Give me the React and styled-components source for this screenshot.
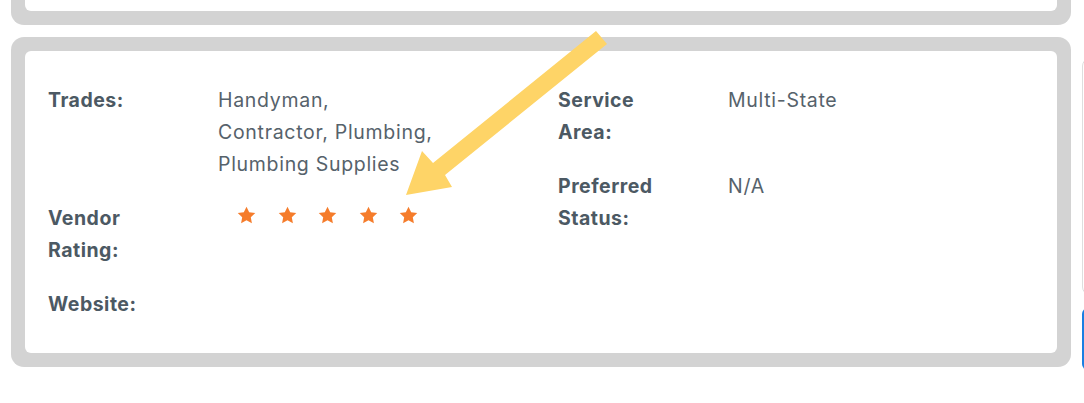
import React from "react";
import styled, { createGlobalStyle, css } from "styled-components";

const GlobalStyle = createGlobalStyle`
  html, body { margin: 0; padding: 0; background: #ffffff; }
  body { font-family: Inter, "Open Sans", Arial, sans-serif; }
  * { box-sizing: border-box; }
`;

const Page = styled.div`
  position: relative;
  display: flex;
  align-items: flex-start;
  gap: 11px;
  padding-left: 11px;
  width: 1084px;
  height: 403px;
  overflow: hidden;
`;

const Main = styled.div`
  width: 1060px;
  flex: none;
  display: flex;
  flex-direction: column;
  gap: 12px;
`;

const Card = styled.section`
  background: #d3d3d3;
  padding: 14px;
  border-radius: 13px;
  ${(p) =>
    p.$tail &&
    css`
      padding-top: 0;
      border-radius: 0 0 13px 13px;
    `}
`;

const CardInner = styled.div`
  background: #ffffff;
  border-radius: 6px;
  padding: 33px 23px 33px 23px;
  ${(p) =>
    p.$tail &&
    css`
      height: 11px;
      padding: 0;
      border-radius: 0 0 6px 6px;
    `}
`;

const InfoGrid = styled.div`
  display: grid;
  grid-template-columns: 510px 1fr;
`;

const Column = styled.div`
  display: flex;
  flex-direction: column;
  gap: 22px;
`;

const Field = styled.div`
  display: grid;
  grid-template-columns: 170px 1fr;
  font-size: 19.5px;
  line-height: 32px;
  letter-spacing: 0.7px;
`;

const Label = styled.div`
  font-weight: 650;
  color: #4c5963;
  width: 120px;
  letter-spacing: 0.5px;
`;

const Value = styled.div`
  color: #56626b;
  font-weight: 400;
  max-width: 218px;
`;

const Stars = styled.div`
  display: flex;
  gap: 21.5px;
  padding-left: 19px;
  height: 32px;
  align-items: center;
  margin-top: -3px;
`;

const Sidebar = styled.aside`
  flex: none;
  width: 200px;
  display: flex;
  flex-direction: column;
  gap: 13px;
  padding-top: 58px;
`;

const SideCard = styled.div`
  height: 237px;
  border: 1px solid #dedede;
  border-radius: 8px;
  background: #fff;
`;

const PrimaryButton = styled.button`
  height: 62px;
  border: none;
  border-radius: 6px;
  background: #1a7fe2;
`;

const Overlay = styled.svg`
  position: absolute;
  left: 0;
  top: 0;
  pointer-events: none;
`;

const Star = () => (
  <svg width="19" height="18" viewBox="0 0 24 23" aria-hidden="true">
    <path
      d="M12 0.8l3.4 7.1 7.8 1-5.7 5.4 1.4 7.7L12 18.3l-6.9 3.7 1.4-7.7L0.8 8.9l7.8-1z"
      fill="#f57c2b"
    />
  </svg>
);

export default function App() {
  return (
    <>
      <GlobalStyle />
      <Page>
        <Main>
          <Card $tail>
            <CardInner $tail />
          </Card>
          <Card>
            <CardInner>
              <InfoGrid>
                <Column>
                  <Field>
                    <Label>Trades:</Label>
                    <Value>Handyman, Contractor, Plumbing, Plumbing Supplies</Value>
                  </Field>
                  <Field>
                    <Label>Vendor Rating:</Label>
                    <Stars>
                      <Star />
                      <Star />
                      <Star />
                      <Star />
                      <Star />
                    </Stars>
                  </Field>
                  <Field>
                    <Label>Website:</Label>
                    <Value />
                  </Field>
                </Column>
                <Column>
                  <Field>
                    <Label>Service Area:</Label>
                    <Value>Multi-State</Value>
                  </Field>
                  <Field>
                    <Label>Preferred Status:</Label>
                    <Value>N/A</Value>
                  </Field>
                </Column>
              </InfoGrid>
            </CardInner>
          </Card>
        </Main>
        <Sidebar>
          <SideCard />
          <PrimaryButton aria-label="action" />
        </Sidebar>
        <Overlay width="1084" height="403" viewBox="0 0 1084 403">
          <polygon
            points="596,31 607,44 445,175 452,187 406,195 422,151 433,163"
            fill="#fed467"
          />
        </Overlay>
      </Page>
    </>
  );
}
